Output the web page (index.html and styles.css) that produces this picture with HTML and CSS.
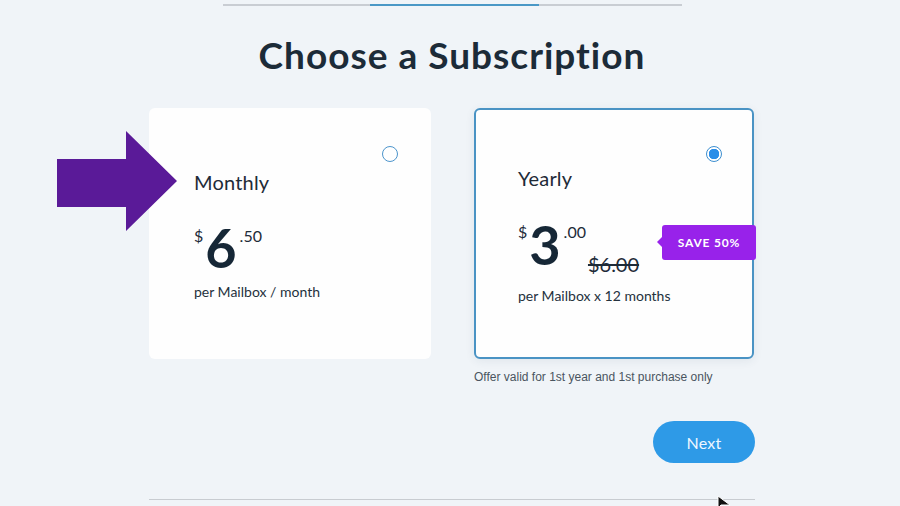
FILE: index.html
```html
<!DOCTYPE html>
<html>
<head>
<meta charset="utf-8">
<link rel="stylesheet" href="styles.css">
</head>
<body>
<div class="page">
  <div class="progress">
    <span class="seg seg-a"></span>
    <span class="seg seg-b active"></span>
    <span class="seg seg-c"></span>
  </div>
  <h1 class="title">Choose a Subscription</h1>
  <div class="plans">
    <div class="plan plan-monthly">
      <svg class="pointer" width="121" height="101" viewBox="0 0 121 101"><polygon points="0,28 69,28 69,0 120,50 69,100 69,76 0,76" fill="#5a1a98"/></svg>
      <span class="radio"></span>
      <div class="plan-name">Monthly</div>
      <div class="price">
        <span class="cur">$</span><span class="int">6</span><span class="dec">.50</span>
      </div>
      <div class="per">per Mailbox / month</div>
    </div>
    <div class="plan-col">
      <div class="plan plan-yearly">
        <span class="radio checked"></span>
        <div class="plan-name">Yearly</div>
        <div class="price">
          <span class="cur">$</span><span class="int">3</span><span class="dec">.00</span><span class="old">$6.00</span>
        </div>
        <div class="per">per Mailbox x 12 months</div>
        <div class="badge">SAVE 50%</div>
      </div>
      <div class="note">Offer valid for 1st year and 1st purchase only</div>
    </div>
  </div>
  <div class="actions">
    <button class="next">Next</button>
  </div>
  <div class="divider"></div>
  <svg class="cursor" width="14" height="12" viewBox="0 0 14 12"><polygon points="1,0 1,12 4,9 13,9" fill="#111" stroke="#fff" stroke-width="1"/></svg>
</div>
</body>
</html>
```
FILE: styles.css
```css
html, body {
  margin: 0;
  padding: 0;
  background: #f0f4f8;
  height: 100%;
  overflow: hidden;
}
body {
  font-family: "Open Sans", "Liberation Sans", sans-serif;
  color: #1d2b39;
}
.page {
  position: relative;
  width: 606px;
  margin-left: calc(50% - 301px);
  padding-top: 4px;
}
.progress {
  display: flex;
  width: 459px;
  margin: 0 auto;
  height: 2px;
}
.seg { height: 2px; background: #c9cdd3; }
.seg-a { width: 147px; }
.seg-b { width: 169px; }
.seg-c { width: 143px; }
.seg.active { background: #4a98c6; }

.title {
  margin: 28px 0 0;
  text-align: center;
  font-family: "Lato", "Open Sans", sans-serif;
  font-weight: 700;
  font-size: 37px;
  line-height: 42px;
  letter-spacing: 1px;
  color: #1c2b38;
}
.plans {
  display: flex;
  gap: 43px;
  margin-top: 32px;
}
.plan {
  position: relative;
  box-sizing: border-box;
  height: 251px;
  background: #fefefe;
  border-radius: 6px;
  display: flex;
  flex-direction: column;
  padding: 38px 33px 0 45px;
  font-family: "Lato", "Open Sans", sans-serif;
}
.plan-monthly { width: 282px; }
.plan-yearly {
  width: 280px;
  border: 2px solid #4a93c4;
  padding: 36px 30px 0 42px;
  box-shadow: 0 2px 10px rgba(40,60,90,0.08);
}
.pointer {
  position: absolute;
  left: -92px;
  top: 23px;
}
.radio {
  align-self: flex-end;
  box-sizing: border-box;
  width: 16px;
  height: 16px;
  border-radius: 50%;
  border: 1.5px solid #4d95cc;
  background: #fff;
}
.radio.checked {
  border-color: #3d8fd0;
  background: radial-gradient(circle, #2b8ee8 0 5px, #fff 5.5px);
}
.plan-name {
  font-size: 20px;
  line-height: 24px;
  margin-top: 8px;
  color: #1e2b38;
  letter-spacing: 0.2px;
}
.plan-yearly .plan-name { margin-top: 4px; }
.price {
  display: flex;
  align-items: flex-start;
  margin-top: 32px;
  height: 50px;
}
.plan-yearly .price { margin-top: 31px; height: 56px; }
.cur {
  font-size: 16px;
  line-height: 16px;
  margin-top: 2px;
  margin-right: 2px;
}
.int {
  font-size: 54px;
  line-height: 44px;
  font-weight: 700;
  color: #162736;
}
.plan-yearly .int { margin-top: 2px; }
.dec {
  font-size: 16px;
  line-height: 16px;
  margin-top: 2px;
  margin-left: 3px;
}
.plan-yearly .cur, .plan-yearly .dec { margin-top: 3px; }
.old {
  font-size: 20px;
  line-height: 20px;
  text-decoration: line-through;
  margin-top: 33px;
  margin-left: 2px;
  color: #1e2b38;
}
.per {
  margin-top: 7px;
  font-size: 14px;
  line-height: 18px;
  color: #24313d;
}
.plan-yearly .per { margin-top: 10px; }
.badge {
  position: absolute;
  left: 186px;
  top: 115px;
  width: 94px;
  height: 35px;
  background: #9822ea;
  color: #fff;
  border-radius: 3px;
  font-family: "Lato", "Open Sans", sans-serif;
  font-weight: 700;
  font-size: 12px;
  letter-spacing: 0.8px;
  display: flex;
  align-items: center;
  justify-content: center;
}
.badge::before {
  content: "";
  position: absolute;
  left: -5px;
  top: 12px;
  border-top: 5px solid transparent;
  border-bottom: 5px solid transparent;
  border-right: 5px solid #9822ea;
}
.note {
  margin-top: 11px;
  font-family: "Liberation Sans", Arial, sans-serif;
  font-size: 12px;
  line-height: 14px;
  color: #4a5560;
}
.actions {
  display: flex;
  justify-content: flex-end;
  margin-top: 37px;
}
.next {
  width: 102px;
  height: 42px;
  border: none;
  border-radius: 21px;
  background: #2e9ae7;
  color: #eef7ff;
  font-family: "Lato", "Open Sans", sans-serif;
  font-size: 16px;
  letter-spacing: 0.3px;
}
.divider {
  margin-top: 36px;
  height: 1px;
  background: #c8ccd1;
}
.cursor {
  position: absolute;
  left: 568px;
  top: 496px;
}
```
